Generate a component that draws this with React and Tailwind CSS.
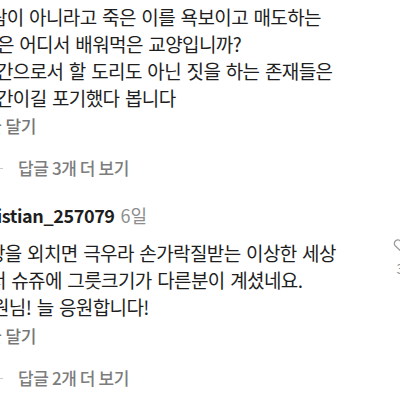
import React from 'react';

const font = "font-['Noto_Sans_CJK_KR','Noto_Sans',sans-serif]";

const CommentLine = ({ text, shift }) => (
  <div className={`whitespace-nowrap leading-[27px] tracking-[-0.6px] [word-spacing:1.8px] ${shift}`}>{text}</div>
);

const ReplyLink = () => (
  <div className="whitespace-nowrap text-[17px] leading-[20px] font-medium tracking-[-0.5px] text-[#777] -ml-[29px] [word-spacing:1px]">
    답글 달기
  </div>
);

const MoreReplies = ({ count }) => (
  <div className="flex items-center gap-[15px] text-[17px] leading-[20px] font-medium tracking-[-0.4px] text-[#7d7d7d] -ml-[21px]">
    <span className="block h-px w-[24px] bg-[#c9c9c9]" />
    <span className="whitespace-nowrap">답글 {count}개 더 보기</span>
  </div>
);

const HeartIcon = () => (
  <svg width="15" height="14" viewBox="0 0 24 22" fill="none" stroke="#9a9a9a" strokeWidth="2">
    <path d="M12 20.5 3.5 12.2A5.4 5.4 0 0 1 12 4.9a5.4 5.4 0 0 1 8.5 7.3Z" />
  </svg>
);

export default function App() {
  return (
    <div className={`w-[400px] h-[400px] overflow-hidden bg-white text-[19px] text-[#1e1e1e] ${font}`}>
      <div className="-mt-[24px]">
        <CommentLine text="정치적 성향을 따지며 고인을 향해 손가락질하는" shift="-ml-[20px]" />
        <CommentLine text="사람이 아니라고 죽은 이를 욕보이고 매도하는" shift="-ml-[27px]" />
        <CommentLine text="것은 어디서 배워먹은 교양입니까?" shift="-ml-[20px]" />
        <CommentLine text="인간으로서 할 도리도 아닌 짓을 하는 존재들은" shift="-ml-[21px]" />
        <CommentLine text="인간이길 포기했다 봅니다" shift="-ml-[21px]" />
      </div>

      <div className="mt-[5px]">
        <ReplyLink />
      </div>
      <div className="mt-[22px]">
        <MoreReplies count={3} />
      </div>

      <div className="mt-[25px] flex w-[430px]">
        <div className="w-[393px] shrink-0">
          <div className="flex items-baseline gap-[6px] whitespace-nowrap leading-[24px] -ml-[31px]">
            <span className="font-semibold text-[18px] tracking-[-0.4px] text-[#1e1e1e]">christian_257079</span>
            <span className="text-[18px] text-[#8e8e8e]">6일</span>
          </div>
          <div className="mt-[12px]">
            <CommentLine text="정상을 외치면 극우라 손가락질받는 이상한 세상" shift="-ml-[29px]" />
            <CommentLine text="에서 슈쥬에 그릇크기가 다른분이 계셨네요." shift="-ml-[28px]" />
            <CommentLine text="의원님! 늘 응원합니다!" shift="-ml-[25px]" />
          </div>
          <div className="mt-[6px]">
            <ReplyLink />
          </div>
          <div className="mt-[22px]">
            <MoreReplies count={2} />
          </div>
        </div>
        <div className="mt-[35px] flex flex-col items-center w-[15px]">
          <HeartIcon />
          <span className="mt-[8px] text-[14px] leading-[16px] text-[#8e8e8e]">3</span>
        </div>
      </div>
    </div>
  );
}
